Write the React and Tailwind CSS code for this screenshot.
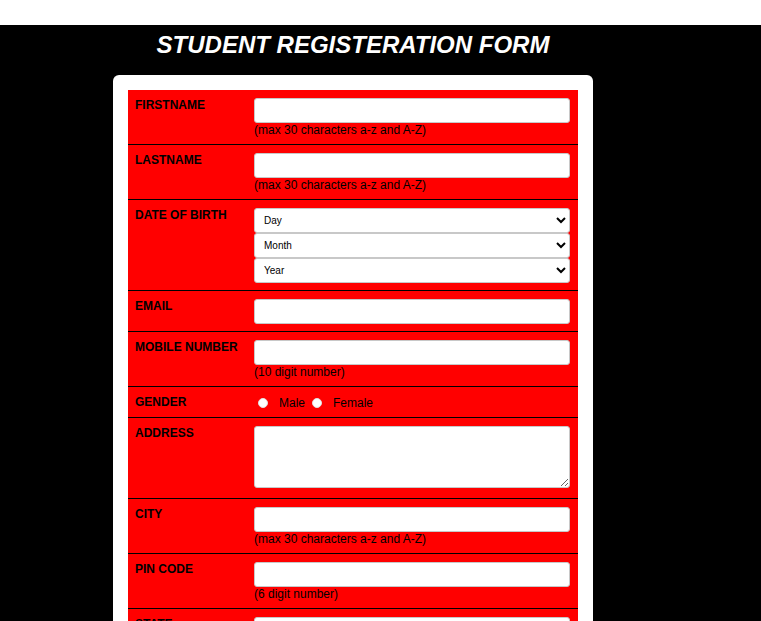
const inputClass = "block w-full h-[25px] bg-white border border-[#c8c8c8] rounded-[3px] px-1 text-[12px] text-black";
const selectClass = "block w-full h-[25px] bg-white border border-[#c8c8c8] rounded-[3px] pl-[5px] pr-1 text-[10px] text-black";
const hintClass = "text-[12px] leading-[14px] text-black";

function Row({ label, className, children }) {
  return (
    <div className={`flex border-b border-black ${className}`}>
      <div className="w-[118px] shrink-0 pl-[7px] pt-[8px] text-[12px] leading-[14px] font-bold text-black">
        {label}
      </div>
      <div className="flex-1 pt-[8px] px-[8px]">{children}</div>
    </div>
  );
}

export default function App() {
  return (
    <div className="min-h-screen bg-black font-['Liberation_Sans',Arial,sans-serif]">
      <div className="h-[25px] bg-white" />

      <div className="ml-[113px] w-[480px] pb-10">
        <h1 className="pt-[6px] h-[50px] text-center text-[24px] leading-[28px] font-bold italic text-white">
          STUDENT REGISTERATION FORM
        </h1>

        <div className="bg-white rounded-[6px] p-[15px]">
          <form className="bg-[#ff0000]">
            <Row label="FIRSTNAME" className="h-[55px]">
              <input type="text" maxLength={30} className={inputClass} />
              <p className={hintClass}>(max 30 characters a-z and A-Z)</p>
            </Row>

            <Row label="LASTNAME" className="h-[55px]">
              <input type="text" maxLength={30} className={inputClass} />
              <p className={hintClass}>(max 30 characters a-z and A-Z)</p>
            </Row>

            <Row label="DATE OF BIRTH" className="h-[91px]">
              <select className={selectClass} defaultValue="">
                <option value="">Day</option>
                {Array.from({ length: 31 }, (_, i) => (
                  <option key={i} value={i + 1}>{i + 1}</option>
                ))}
              </select>
              <select className={selectClass} defaultValue="">
                <option value="">Month</option>
                {["Jan", "Feb", "Mar", "Apr", "May", "Jun", "Jul", "Aug", "Sep", "Oct", "Nov", "Dec"].map((m) => (
                  <option key={m} value={m}>{m}</option>
                ))}
              </select>
              <select className={selectClass} defaultValue="">
                <option value="">Year</option>
                {Array.from({ length: 30 }, (_, i) => (
                  <option key={i} value={2010 - i}>{2010 - i}</option>
                ))}
              </select>
            </Row>

            <Row label="EMAIL" className="h-[41px]">
              <input type="email" className={inputClass} />
            </Row>

            <Row label="MOBILE NUMBER" className="h-[55px]">
              <input type="text" maxLength={10} className={inputClass} />
              <p className={hintClass}>(10 digit number)</p>
            </Row>

            <Row label="GENDER" className="h-[31px]">
              <div className="flex items-center h-[16px] text-[12px] text-black">
                <input type="radio" name="gender" className="appearance-none ml-[4px] mr-[11px] w-[10px] h-[10px] rounded-full bg-white border border-[#e0e0e0]" />
                <span>Male</span>
                <input type="radio" name="gender" className="appearance-none ml-[7px] mr-[11px] w-[10px] h-[10px] rounded-full bg-white border border-[#e0e0e0]" />
                <span>Female</span>
              </div>
            </Row>

            <Row label="ADDRESS" className="h-[81px]">
              <textarea className="block w-full h-[62px] bg-white border border-[#c8c8c8] rounded-[3px] text-[12px] text-black" />
            </Row>

            <Row label="CITY" className="h-[55px]">
              <input type="text" maxLength={30} className={inputClass} />
              <p className={hintClass}>(max 30 characters a-z and A-Z)</p>
            </Row>

            <Row label="PIN CODE" className="h-[55px]">
              <input type="text" maxLength={6} className={inputClass} />
              <p className={hintClass}>(6 digit number)</p>
            </Row>

            <Row label="STATE" className="h-[55px]">
              <input type="text" maxLength={30} className={inputClass} />
              <p className={hintClass}>(max 30 characters a-z and A-Z)</p>
            </Row>

            <Row label="COUNTRY" className="h-[41px]">
              <input type="text" defaultValue="India" readOnly className={inputClass} />
            </Row>

            <div className="flex justify-center gap-3 py-3">
              <button type="submit" className="bg-white border border-[#c8c8c8] rounded-[3px] px-4 h-[25px] text-[12px]">Submit</button>
              <button type="reset" className="bg-white border border-[#c8c8c8] rounded-[3px] px-4 h-[25px] text-[12px]">Reset</button>
            </div>
          </form>
        </div>
      </div>
    </div>
  );
}
